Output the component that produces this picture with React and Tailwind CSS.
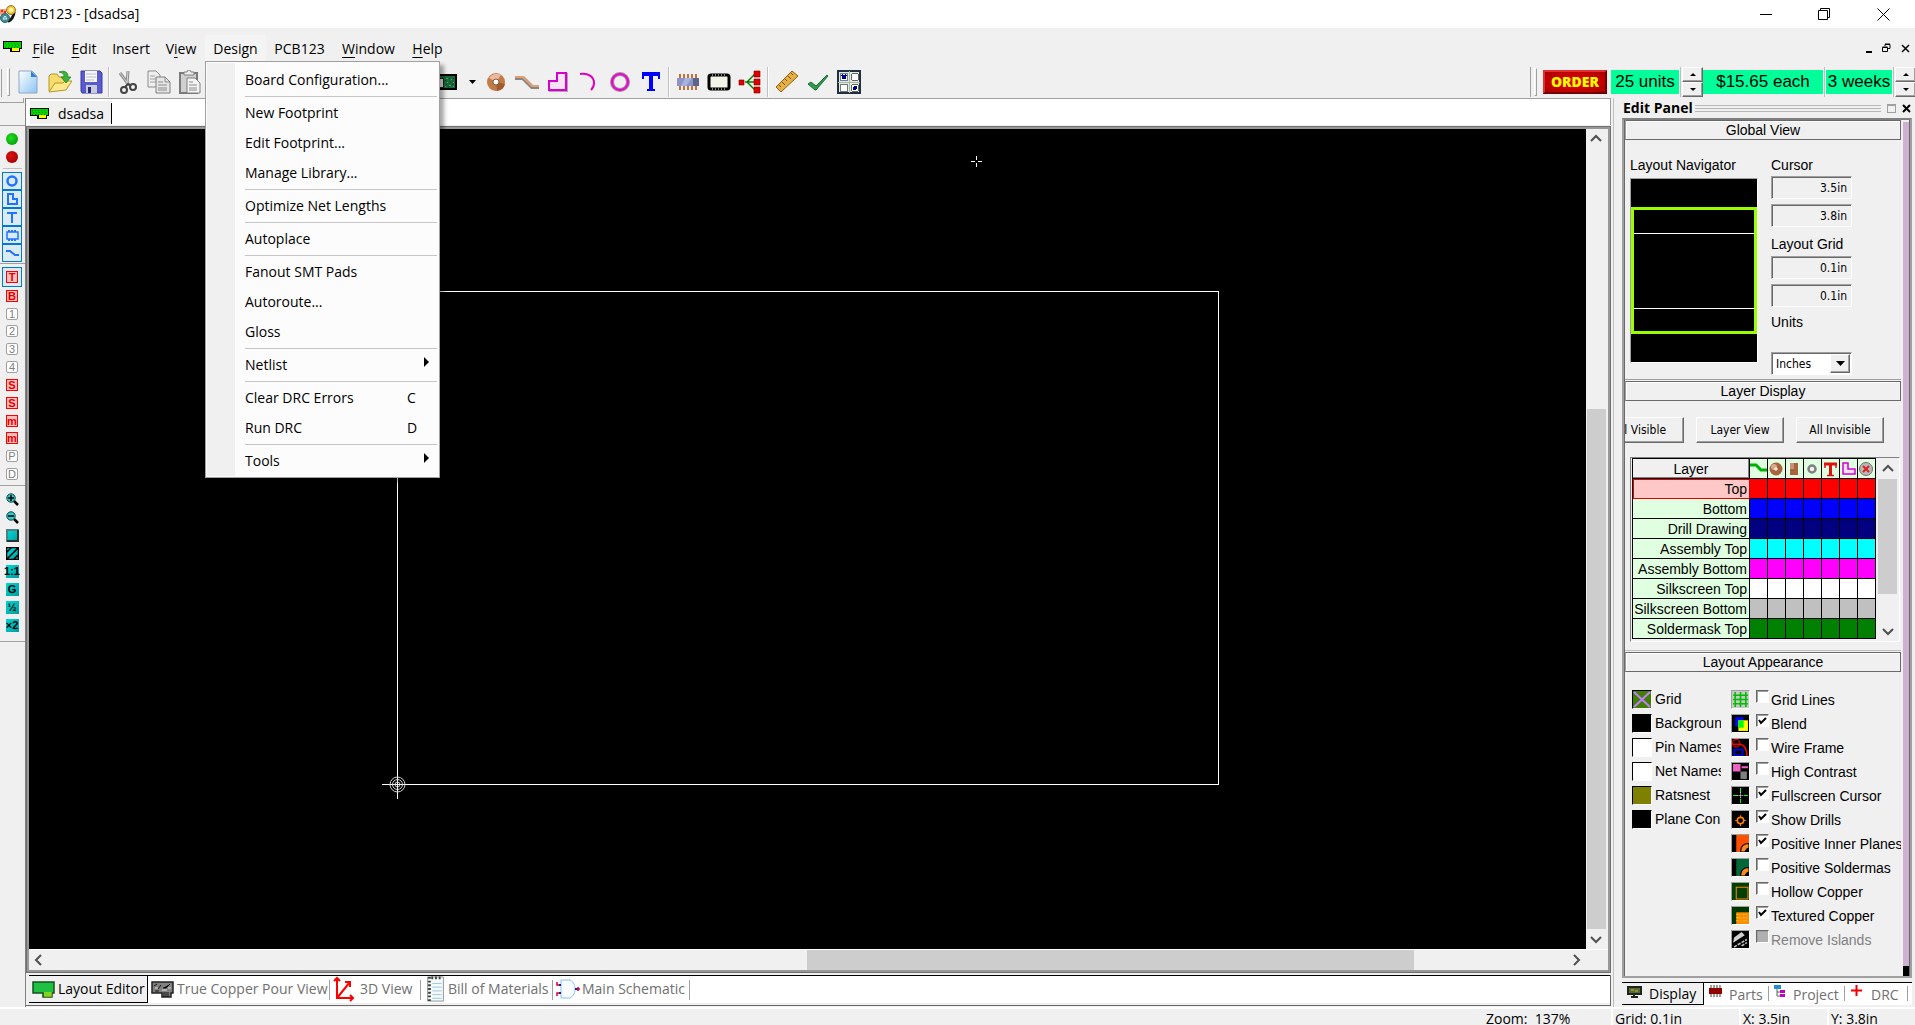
import React, { useState } from "react";
import clsx from "clsx";

const MENUS = [
  { label: "File", key: 0, width: "w-[39px]" },
  { label: "Edit", key: 0, width: "w-[42px]" },
  { label: "Insert", width: "w-[52px]" },
  { label: "View", key: 1, width: "w-[48px]" },
  { label: "Design", width: "w-[61px]" },
  { label: "PCB123", width: "w-[67px]" },
  { label: "Window", key: 0, width: "w-[71px]" },
  { label: "Help", key: 0, width: "w-[47px]" },
];

// null draws a separator
const DESIGN_MENU = [
  { label: "Board Configuration..." },
  null,
  { label: "New Footprint" },
  { label: "Edit Footprint..." },
  { label: "Manage Library..." },
  null,
  { label: "Optimize Net Lengths" },
  null,
  { label: "Autoplace" },
  null,
  { label: "Fanout SMT Pads" },
  { label: "Autoroute..." },
  { label: "Gloss" },
  null,
  { label: "Netlist", sub: true },
  null,
  { label: "Clear DRC Errors", hotkey: "C" },
  { label: "Run DRC", hotkey: "D" },
  null,
  { label: "Tools", sub: true },
];

const LAYERS = [
  { name: "Top", color: "bg-[#ff0000]" },
  { name: "Bottom", color: "bg-[#0000ff]" },
  { name: "Drill Drawing", color: "bg-[#000080]" },
  { name: "Assembly Top", color: "bg-[#00ffff]" },
  { name: "Assembly Bottom", color: "bg-[#ff00ff]" },
  { name: "Silkscreen Top", color: "bg-white" },
  { name: "Silkscreen Bottom", color: "bg-[#c0c0c0]" },
  { name: "Soldermask Top", color: "bg-[#008000]" },
];

const SWATCHES = [
  { name: "Grid", color: "bg-[#408000]", cross: true },
  { name: "Background", color: "bg-black" },
  { name: "Pin Names", color: "bg-white" },
  { name: "Net Names", color: "bg-white" },
  { name: "Ratsnest", color: "bg-[#808000]" },
  { name: "Plane Conn", color: "bg-black" },
];

const OPTIONS = [
  { name: "Grid Lines", icon: "grid" },
  { name: "Blend", icon: "blend", on: true },
  { name: "Wire Frame", icon: "wire" },
  { name: "High Contrast", icon: "contrast" },
  { name: "Fullscreen Cursor", icon: "cursor", on: true },
  { name: "Show Drills", icon: "drill", on: true },
  { name: "Positive Inner Planes", icon: "plane", on: true },
  { name: "Positive Soldermas", icon: "mask" },
  { name: "Hollow Copper", icon: "hollow" },
  { name: "Textured Copper", icon: "texture", on: true },
  { name: "Remove Islands", icon: "islands", disabled: true },
];

const SUNKEN = "border border-t-[#a0a0a0] border-l-[#a0a0a0] border-r-white border-b-white";
const RAISED = "bg-[#f0f0f0] border border-t-white border-l-white border-r-[#696969] border-b-[#696969] shadow-[inset_-1px_-1px_0_#a0a0a0]";

function BoardIcon() {
  return (
    <svg width="20" height="12" viewBox="0 0 20 12" shapeRendering="crispEdges">
      <path d="M0 0h19v8h-2v3H7V8H0z" />
      <path d="M1 1h17v6H1z" fill="#00d800" />
      <path d="M2 2h1M5 2h1M8 2h1M11 2h1M14 2h1M3 4h1M6 4h1M9 4h1M12 4h1M15 4h1M2 6h1M5 6h1M8 6h1M11 6h1M14 6h1" stroke="#007800" />
      <path d="M9 7h7v3H9z" fill="#ffff00" />
    </svg>
  );
}

function AppIcon() {
  return (
    <svg width="16" height="20" viewBox="0 0 16 20">
      <path d="M8 17c3 0 6-5 6-9" fill="none" stroke="#111" strokeWidth="3" />
      <circle cx="11" cy="6" r="4.5" fill="#f0c030" stroke="#9a7a20" />
      <circle cx="11" cy="6" r="2.5" fill="#fff0a0" />
      <rect x="0" y="5" width="6" height="6" rx="1" fill="#f39a7c" />
      <path d="M1 7h2M4 8h2" stroke="#e03010" strokeWidth="2" />
      <circle cx="5" cy="14" r="4.5" fill="#3f8d99" stroke="#2a6670" />
      <path d="M3 15l2-3 2 3z" fill="none" stroke="#e6f4f4" />
    </svg>
  );
}

const TOOL_ART = {
  new: (
    <>
      <defs>
        <linearGradient id="page" x1="0" y1="0" x2="1" y2="1">
          <stop offset="0" stopColor="#fff" />
          <stop offset="1" stopColor="#8cc4f4" />
        </linearGradient>
      </defs>
      <path d="M2 1h13l5 5v17H2z" fill="url(#page)" stroke="#8fa6c4" />
      <path d="M14 1l6 6h-6z" fill="#2f7fd6" />
    </>
  ),
  open: (
    <>
      <path d="M1 21V6l2-2h6l2 3h8v4" fill="#f6dc6a" stroke="#b8942a" />
      <path d="M1 22l6-9h8l2-2h7l-6 9z" fill="#ffe98a" stroke="#b8942a" />
      <path d="M11 2c6-2 9 0 9 5h3l-5 6-5-6h3c0-3-1-4-5-5z" fill="#3cb43c" stroke="#1d7a1d" strokeWidth=".7" />
    </>
  ),
  save: (
    <>
      <path d="M2 1h19l2 2v20H3l-1-2z" fill="#5a5ad0" stroke="#3a3aa8" />
      <path d="M6 1h12v11H6z" fill="#f6f6f6" />
      <path d="M7 4h10M7 7h10M7 10h8" stroke="#b8c0c8" />
      <path d="M7 15h11v8H7z" fill="#c8ccd8" />
      <path d="M9 17h3v6H9z" fill="#27277c" />
    </>
  ),
  cut: (
    <>
      <path d="M4 3l9 12M12 1l-1 13" stroke="#8a8a8a" strokeWidth="3" />
      <path d="M4 3l9 12M12 1l-1 13" stroke="#d8d8d8" strokeWidth="1" />
      <circle cx="8" cy="20" r="3" fill="none" stroke="#444" strokeWidth="2" />
      <circle cx="17" cy="17" r="3" fill="none" stroke="#444" strokeWidth="2" />
      <path d="M9 17l3-3 3 2" fill="none" stroke="#444" strokeWidth="2" />
    </>
  ),
  copy: (
    <>
      <path d="M1 1h8l4 4v12H1z" fill="#eee" stroke="#8a8a8a" />
      <path d="M3 6h5M3 9h6M3 12h6" stroke="#a0a0a0" />
      <path d="M9 7h9l5 5v11H9z" fill="#e6e6e6" stroke="#808080" />
      <path d="M18 7v5h5M11 12h5M11 15h9M11 18h9M11 20h9" fill="none" stroke="#8a8a8a" />
    </>
  ),
  paste: (
    <>
      <path d="M2 3h17v20H2z" fill="#d0d0d0" stroke="#7a7a7a" strokeWidth="2" />
      <path d="M6 5V2h3l1-2h2l1 2h3v3z" fill="#eee" stroke="#808080" />
      <path d="M9 8h8l5 5v10H9z" fill="#f4f4f4" stroke="#808080" />
      <path d="M11 12h4M11 15h8M11 18h8M11 20h8" stroke="#8a8a8a" />
    </>
  ),
  pad: (
    <>
      <circle cx="12" cy="12" r="9" fill="#c07c48" />
      <path d="M5 8a9 9 0 0 1 12-3l-5 7z" fill="#ecb8a0" />
      <path d="M12 12l9 2a9 9 0 0 1-8 7z" fill="#a05c2c" />
      <circle cx="12" cy="12" r="3" fill="#fff" stroke="#8a5a38" />
    </>
  ),
  trace: (
    <>
      <path d="M0 8h8l9 9h7" fill="none" stroke="#8a8484" strokeWidth="4" />
      <path d="M0 7h8l9 9h7" fill="none" stroke="#e0a070" strokeWidth="2" />
    </>
  ),
  poly: (
    <>
      <path d="M12 4h9v17H4v-9h8z" fill="none" stroke="#b0a0b0" strokeWidth="2" />
      <path d="M11 3h9v17H3v-9h8z" fill="#f6e4f6" stroke="#d800d0" strokeWidth="2" />
    </>
  ),
  arc: <path d="M3 4c9-1 14 3 14 9 0 3-1 5-3 7" fill="none" stroke="#e000c0" strokeWidth="2" />,
  circle: (
    <>
      <circle cx="12" cy="12" r="8" fill="none" stroke="#a08ca0" strokeWidth="4" />
      <circle cx="12" cy="12" r="8" fill="none" stroke="#f000d0" strokeWidth="2" />
    </>
  ),
  text: (
    <>
      <path d="M3 4h18M12 4v17" stroke="#0000ff" strokeWidth="4" />
      <path d="M4 4v5M20 4v5M8 20h8" stroke="#0000ff" strokeWidth="2" />
    </>
  ),
  ic: (
    <>
      <path d="M4 4v16M8 4v16M12 4v16M16 4v16M20 4v16" stroke="#c07040" strokeWidth="2" />
      <path d="M1 8h22v8H1z" fill="#8c94c8" />
      <path d="M9 8h7l-6 8H5z" fill="#a8b0dc" />
      <path d="M17 8h6v8h-6z" fill="#5c6488" />
    </>
  ),
  film: (
    <>
      <rect x="2" y="5" width="20" height="14" rx="2" fill="#f4f4e8" stroke="#000" strokeWidth="3" />
      <path d="M5 5h15M5 19h15" stroke="#fff" strokeDasharray="1 2" />
    </>
  ),
  net: (
    <>
      <path d="M7 12h9M9 12l8-8M9 12l8 8" stroke="#008000" strokeWidth="1.5" />
      <path d="M1 10h5v5H1zM16 1h6v6h-6zM16 9h6v6h-6zM16 17h6v6h-6z" fill="#e00000" stroke="#800000" strokeWidth=".6" />
    </>
  ),
  ruler: (
    <>
      <path d="M1 17L17 1l6 5L6 22z" fill="#e8b040" stroke="#8c6410" />
      <path d="M4 15l2 2M7 12l3 3M10 9l2 2M13 6l3 3M16 3l2 2" stroke="#6c4c08" />
    </>
  ),
  check: <path d="M2 14l3-2 5 4L21 5l1 1-12 14H9z" fill="#2c9c4c" stroke="#1c7038" strokeWidth="1" />,
  form: (
    <g shapeRendering="crispEdges">
      <path d="M1 1h22v22H1z" fill="#e4ece0" stroke="#203040" strokeWidth="2" />
      <path d="M12 1v22M1 12h22" stroke="#a8b8a8" />
      <path d="M3 3h7v7H3z" fill="#fff" stroke="#7080a0" />
      <path d="M5 5l4 4M9 5l-4 4" stroke="#000080" strokeWidth="1.5" />
      <path d="M3 14h7v7H3z" fill="#fff" stroke="#707870" />
      <circle cx="18" cy="7" r="4" fill="#fff" stroke="#606860" />
      <circle cx="18" cy="18" r="4" fill="#fff" stroke="#606860" />
      <circle cx="18" cy="18" r="2" fill="#000080" />
    </g>
  ),
};

function Tool({ name }) {
  return (
    <button aria-label={name} className="flex h-[30px] w-[31px] items-center justify-center">
      <svg width="24" height="24" viewBox="0 0 24 24">{TOOL_ART[name]}</svg>
    </button>
  );
}

function Divider() {
  return <div className="mx-[2px] h-[30px] w-[2px] border-l border-[#c0c0c0] bg-white" />;
}

function Spinner({ name }) {
  return (
    <div className="flex h-[30px] w-[21px] flex-col">
      <button aria-label={`${name} up`} className={clsx(RAISED, "flex flex-1 items-center justify-center")}>
        <svg width="6" height="3" viewBox="0 0 6 3"><path d="M0 3l3-3 3 3z" /></svg>
      </button>
      <button aria-label={`${name} down`} className={clsx(RAISED, "flex flex-1 items-center justify-center")}>
        <svg width="6" height="3" viewBox="0 0 6 3"><path d="M0 0h6L3 3z" /></svg>
      </button>
    </div>
  );
}

function TitleBar() {
  return (
    <header className="flex h-7 shrink-0 items-center bg-white">
      <AppIcon />
      <h1 className="ml-[6px] flex-1 text-[14px] leading-5">PCB123 - [dsadsa]</h1>
      <div className="flex items-center">
        <button aria-label="Minimize" className="flex h-7 w-[58px] items-center justify-center">
          <svg width="12" height="12"><path d="M0 6.500h12" stroke="#000" /></svg>
        </button>
        <button aria-label="Restore" className="flex h-7 w-[58px] items-center justify-center">
          <svg width="13" height="13" fill="none" stroke="#000"><path d="M.5 2.500h9v9h-9zM2.500 2V.500h9v9H10" /></svg>
        </button>
        <button aria-label="Close" className="flex h-7 w-[62px] items-center justify-center pr-[2px]">
          <svg width="13" height="13" stroke="#000"><path d="M.5.5l12 12M12.500.5l-12 12" /></svg>
        </button>
      </div>
    </header>
  );
}

function MenuLabel({ label, keyIndex }) {
  if (keyIndex === undefined) return label;
  return (
    <>
      {label.slice(0, keyIndex)}
      <span className="underline underline-offset-[3px]">{label[keyIndex]}</span>
      {label.slice(keyIndex + 1)}
    </>
  );
}

function DesignMenu() {
  return (
    <div role="menu" className="absolute left-0 top-[26px] z-10 flex w-[235px] border border-[#a0a0a0] bg-[#fcfcfc] py-px pl-px shadow-[4px_4px_4px_rgba(0,0,0,0.35)]">
      <div className="w-[28px] bg-[#f0f0f0]" />
      <div className="flex-1 pl-[10px] pr-[2px] pt-[2px]">
        {DESIGN_MENU.map((item, i) =>
          item === null ? (
            <div key={i} className="my-px h-px bg-[#c6c6c6]" />
          ) : (
            <button key={item.label} role="menuitem" className="flex h-[30px] w-full items-center text-left">
              <span className="flex-1">{item.label}</span>
              {item.hotkey && <span className="mr-[20px] w-[10px]">{item.hotkey}</span>}
              {item.sub && (
                <svg width="5" height="10" viewBox="0 0 5 10" className="mb-[6px] mr-[8px]"><path d="M0 0l5 5-5 5z" /></svg>
              )}
            </button>
          )
        )}
      </div>
    </div>
  );
}

function MenuBar({ open, setOpen }) {
  return (
    <nav className="flex h-[39px] shrink-0 items-start pl-[3px] pt-[7px]">
      <div className="flex h-[24px] w-[21px] items-center"><BoardIcon /></div>
      {MENUS.map((m) => (
        <div key={m.label} className={clsx("relative", m.width)}>
          <button
            onClick={() => setOpen(open === m.label ? "" : m.label)}
            className={clsx("flex h-[27px] w-full items-center justify-center", open === m.label && "bg-[#f4f4f4]")}
          >
            <span><MenuLabel label={m.label} keyIndex={m.key} /></span>
          </button>
          {m.label === "Design" && open === "Design" && <DesignMenu />}
        </div>
      ))}
      <div className="ml-auto flex h-[26px] items-center gap-[10px] pr-[5px]">
        <button aria-label="Minimize document"><svg width="6" height="9"><path d="M0 7h6v2H0z" /></svg></button>
        <button aria-label="Restore document">
          <svg width="9" height="10" fill="none" stroke="#000"><path d="M.5 4.500h5v4h-5zM.5 4h5M3 3V1.500h5v4H6M3 1h5" /></svg>
        </button>
        <button aria-label="Close document"><svg width="9" height="9" stroke="#000" strokeWidth="1.500"><path d="M1 1l7 7M8 1L1 8" /></svg></button>
      </div>
    </nav>
  );
}

function Grip() {
  return <div className="h-[28px] w-[3px] border border-b-[#a0a0a0] border-l-white border-r-[#a0a0a0] border-t-white" />;
}

function Toolbar() {
  return (
    <div className="flex h-[31px] shrink-0 items-start">
      <div className="mt-[2px] h-[28px] w-[2px] border-r border-[#a0a0a0]" />
      <div className="ml-[5px] mr-[3px] mt-px"><Grip /></div>
      <Tool name="new" />
      <Tool name="open" />
      <Tool name="save" />
      <Divider />
      <Tool name="cut" />
      <Tool name="copy" />
      <Tool name="paste" />
      <div className="w-[220px]" />
      <button aria-label="component" className="flex h-[30px] w-[55px] items-center">
        <svg width="32" height="16" viewBox="0 0 32 16" shapeRendering="crispEdges">
          <path d="M1 1h30v14H1z" fill="#186838" stroke="#000" strokeWidth="2" />
          <path d="M6 4h12v9H6z" fill="#e8e8e8" stroke="#222" />
          <path d="M21 4h2M26 5h1M22 8h1M28 8h1M24 11h2M20 12h1M28 12h1" stroke="#4aa868" />
          <path d="M20 6h1M24 4h1M28 4h1M25 8h1M21 10h1M27 10h1M23 13h1" stroke="#0c4020" />
        </svg>
        <svg width="7" height="4" viewBox="0 0 7 4" className="ml-[12px]"><path d="M0 0h7L3.500 4z" /></svg>
      </button>
      <Tool name="pad" />
      <Tool name="trace" />
      <Tool name="poly" />
      <Tool name="arc" />
      <Tool name="circle" />
      <Tool name="text" />
      <Divider />
      <Tool name="ic" />
      <Tool name="film" />
      <Tool name="net" />
      <Divider />
      <Tool name="ruler" />
      <Tool name="check" />
      <Tool name="form" />
      <div className="-mr-px ml-auto flex items-center">
        <div className="mr-[3px] h-[30px] w-px bg-[#a0a0a0]" />
        <Grip />
        <button className="ml-[6px] mr-[4px] h-[24px] w-[64px] border-2 border-b-[#700000] border-l-[#e03030] border-r-[#700000] border-t-[#e03030] bg-radial from-[#f00000] to-[#a80000] text-[14px] font-extrabold leading-5 text-[#ffff00]">
          ORDER
        </button>
        <span className="h-[24px] w-[68px] bg-[#00ff99] text-center font-['Liberation_Sans',sans-serif] text-[17px] leading-6">25 units</span>
        <div className="mx-px h-[30px] w-px bg-[#c0c0c0]" />
        <Spinner name="Units" />
        <span className="h-[24px] w-[120px] bg-[#00ff99] text-center font-['Liberation_Sans',sans-serif] text-[17px] leading-6">$15.65 each</span>
        <div className="mx-px h-[30px] w-px bg-[#c0c0c0]" />
        <span className="h-[24px] w-[66px] whitespace-nowrap bg-[#00ff99] text-center font-['Liberation_Sans',sans-serif] text-[17px] leading-6">3 weeks</span>
        <div className="mx-px h-[30px] w-px bg-[#c0c0c0]" />
        <Spinner name="Weeks" />
      </div>
    </div>
  );
}

const MODE_ART = [
  <circle key="o" cx="8" cy="8" r="4.500" fill="none" stroke="#1e74ff" strokeWidth="2.500" />,
  <path key="p" d="M4 3h5v5h4v5H4z" fill="none" stroke="#1e74ff" strokeWidth="2" />,
  <path key="t" d="M3 4h10M8 4v10" stroke="#1e74ff" strokeWidth="2" />,
  <g key="f" stroke="#1e74ff" fill="none"><rect x="3" y="5" width="11" height="7" strokeWidth="1.500" /><path d="M5 3v2M8 3v2M11 3v2M5 12v2M8 12v2M11 12v2" strokeWidth="2" /></g>,
  <path key="s" d="M2 6h4l5 4h4" fill="none" stroke="#1e74ff" strokeWidth="2" />,
];

const LAYER_KEYS = ["T", "B", "1", "2", "3", "4", "S", "S", "m", "m", "P", "D"];

function TealTile({ children }) {
  return (
    <svg width="13" height="13" viewBox="0 0 13 13">
      <defs>
        <linearGradient id="teal" x1="0" y1="0" x2="1" y2="1">
          <stop offset="0" stopColor="#00e0e0" />
          <stop offset="1" stopColor="#009898" />
        </linearGradient>
      </defs>
      <path d="M0 0h13v13H0z" fill="url(#teal)" />
      {children}
    </svg>
  );
}

function TealText({ children }) {
  return (
    <span className="flex h-[13px] w-[13px] items-center justify-center bg-linear-to-br from-[#00d8d8] to-[#009c9c] text-[11px] font-bold leading-3">
      {children}
    </span>
  );
}

function Magnifier({ plus }) {
  return (
    <svg width="13" height="13" viewBox="0 0 13 13">
      <path d="M8 8l4 4" stroke="#000" strokeWidth="2.500" />
      <circle cx="5" cy="5" r="4.200" fill="#30c8c8" stroke="#084848" />
      <path d={plus ? "M2 5h6M5 2v6" : "M2 5h6"} stroke="#000" strokeWidth="1.500" />
    </svg>
  );
}

const ZOOM_TOOLS = [
  { name: "Zoom in", art: <Magnifier plus /> },
  { name: "Zoom out", art: <Magnifier /> },
  { name: "Zoom window", art: <TealTile><path d="M1 12V1h11" fill="none" stroke="#508080" strokeWidth="2" /><path d="M12 1v11H1" fill="none" stroke="#303030" strokeWidth="2" /></TealTile> },
  { name: "Redraw", art: <TealTile><path d="M0 6l6-6M1 12L12 1M7 13l6-6M.5.5h12v12H.5z" fill="none" stroke="#000" strokeWidth="1.500" /></TealTile> },
  { name: "Actual size", art: <TealText>1:1</TealText> },
  { name: "Grid", art: <TealText>G</TealText> },
  { name: "Half", art: <TealText>½</TealText> },
  { name: "Double", art: <TealText>×2</TealText> },
];

function LeftRail() {
  return (
    <aside className="w-[25px] shrink-0 font-['Liberation_Sans',sans-serif]">
      <div className="mr-px h-[5px] border-b border-r border-[#a0a0a0]" />
      <div className="h-[23px] border-b border-[#a0a0a0]" />
      <div className="flex flex-col pl-[2px] pt-1">
        {["from-[#20e020] to-[#008c00]", "from-[#e01010] to-[#900000]"].map((c, i) => (
          <button key={c} aria-label={i ? "Stop" : "Go"} className="flex h-[18px] w-[19px] items-center justify-center">
            <span className={clsx("h-3 w-3 rounded-full bg-radial-[at_40%_40%]", c)} />
          </button>
        ))}
      </div>
      <div className="mx-[3px] mt-[2px] h-px bg-[#c0c0c0]" />
      <div className="ml-[2px] mt-[3px] flex h-[90px] w-[20px] flex-col">
        {MODE_ART.map((art, i) => (
          <button key={i} aria-label={`Mode ${i + 1}`} className="flex flex-1 items-center justify-center border border-[#0078d7] bg-[#dceaf4]">
            <svg width="16" height="16" viewBox="0 0 16 16">{art}</svg>
          </button>
        ))}
      </div>
      <div className="mt-px h-px bg-[#a0a0a0]" />
      <div className="ml-[2px] mt-[3px] flex h-[216px] w-[20px] flex-col">
        {LAYER_KEYS.map((k, i) => {
          const red = "TBSm".includes(k);
          return (
            <button key={i} aria-label={`Layer ${k}`} className={clsx("flex flex-1 items-center justify-center", i === 0 && "border border-[#0078d7] bg-[#dceaf4]")}>
              <span className={clsx("flex h-3 w-3 items-center justify-center border text-[11px] leading-3", red ? "border-[#ff0000] bg-[#ffc0c0] font-bold text-[#e00000]" : "rounded-[2px] border-[#a0a0a0] bg-white text-[#808080]")}>
                {k}
              </span>
            </button>
          );
        })}
      </div>
      <div className="mt-[2px] h-px bg-[#a0a0a0]" />
      <div className="ml-[2px] mt-1 flex h-[144px] w-[20px] flex-col">
        {ZOOM_TOOLS.map((z) => (
          <button key={z.name} aria-label={z.name} className="flex flex-1 items-center justify-center">{z.art}</button>
        ))}
      </div>
      <div className="mt-[7px] h-px bg-[#a0a0a0]" />
    </aside>
  );
}

function Chevron({ d }) {
  return (
    <svg width="12" height="12" viewBox="0 0 12 12" fill="none" stroke="#505050" strokeWidth="2"><path d={d} /></svg>
  );
}

function Board() {
  return (
    <svg className="block min-h-0 min-w-0 flex-1 bg-black" fill="none">
      <g stroke="#fff" shapeRendering="crispEdges">
        <rect x="368.500" y="162.500" width="821" height="493" />
        <path d="M353 655.500h15M368.500 656v14" />
        <path d="M942 32.500h4M949 32.500h4M947.500 27v4M947.500 34v4" />
      </g>
      <g stroke="#d0d0d0">
        <circle cx="368.500" cy="655.500" r="7.500" />
        <circle cx="368.500" cy="655.500" r="5" />
        <circle cx="368.500" cy="655.500" r="2.500" />
      </g>
    </svg>
  );
}

function Workspace() {
  const tab = "flex h-full items-center whitespace-nowrap text-[14px] leading-5";
  return (
    <main className="flex min-w-0 flex-1 flex-col border-l border-[#808080]">
      <div className="flex h-[27px] shrink-0 items-end border-r border-t border-[#a0a0a0] bg-white pb-px pl-1">
        <div className="flex h-[23px] items-end bg-[#f0f0f0]">
          <button className="flex items-center border-r border-black pr-[7px]">
            <BoardIcon />
            <span className="ml-[8px] leading-[21px]">dsadsa</span>
          </button>
        </div>
      </div>
      <div className="mt-px flex min-h-0 flex-1 flex-col border-[3px] border-[#989898] outline-1 -outline-offset-1 outline-[#707070]">
        <div className="flex min-h-0 flex-1">
          <Board />
          <div className="flex w-[22px] flex-col items-center pr-[2px]">
            <div className="flex h-5 items-center"><Chevron d="M1 8l5-5 5 5" /></div>
            <div className="flex w-full flex-1 flex-col pl-px">
              <div className="grow-[260]" />
              <div className="grow-[519] bg-[#cdcdcd]" />
            </div>
            <div className="flex h-5 items-center"><Chevron d="M1 4l5 5 5-5" /></div>
          </div>
        </div>
        <div className="flex h-[21px] shrink-0 items-center border-t border-white pr-[22px]">
          <div className="flex w-5 justify-center"><Chevron d="M8 1L3 6l5 5" /></div>
          <div className="flex h-5 flex-1">
            <div className="grow-[757]" />
            <div className="grow-[607] bg-[#cdcdcd]" />
            <div className="grow-[152]" />
          </div>
          <div className="flex w-5 justify-center"><Chevron d="M4 1l5 5-5 5" /></div>
        </div>
      </div>
      <div className="mt-[2px] flex h-[31px] shrink-0 items-start border-b border-r border-[#696969] pb-[2px] pl-[3px]">
        <div className="flex h-full flex-1 border-t border-black bg-white text-[#707070]">
          <button className={clsx(tab, "w-[119px] border-b border-r border-black bg-[#f0f0f0] pl-[3px] text-black")}>
            <svg width="23" height="18" viewBox="0 0 23 18" className="mr-[3px]">
              <path d="M1 2h21v11h-2v4h-9v-4H1z" fill="#20c040" stroke="#145020" strokeWidth="1.500" />
              <path d="M13 12v5M15 12v5M17 12v5M19 12v5" stroke="#e8e800" />
            </svg>
            Layout Editor
          </button>
          <button className={clsx(tab, "w-[181px] pb-px pl-[3px]")}>
            <svg width="23" height="18" viewBox="0 0 23 18" className="mr-[3px]">
              <path d="M1 2h21v11h-2v4h-9v-4H1z" fill="#808080" stroke="#202020" strokeWidth="1.500" />
              <path d="M3 6l3-2M7 9l3-4M12 8h3l4-4M4 11h4M13 12v5M15 12v5M17 12v5" stroke="#101010" />
              <path d="M4 8h3M11 10h5M17 8h3" stroke="#e0e0e0" />
            </svg>
            True Copper Pour View
          </button>
          <div className="mt-[4px] h-[20px] w-px bg-[#a0a0a0]" />
          <button className={clsx(tab, "w-[90px] pb-px pl-[3px]")}>
            <svg width="22" height="26" viewBox="0 0 22 26" fill="none" stroke="#ff0000" strokeWidth="2" className="mr-[5px]">
              <path d="M4 2v20h16M4 22L17 6M1 5l3-3 3 3M12 6h5v5M17 19l3 3-3 3" />
            </svg>
            3D View
          </button>
          <div className="mt-[4px] h-[20px] w-px bg-[#a0a0a0]" />
          <button className={clsx(tab, "w-[131px] pb-px pl-[5px]")}>
            <svg width="19" height="26" viewBox="0 0 19 28" className="mr-[3px]">
              <path d="M1 1h17v26H1z" fill="#f4fafa" stroke="#909090" />
              <path d="M3 1v26" stroke="#404040" strokeWidth="3" strokeDasharray="2 2" />
              <path d="M5 2h12" stroke="#404040" strokeWidth="3" strokeDasharray="2 2" />
              <path d="M6 8h10M6 12h10M6 16h10M6 20h10M6 24h10" stroke="#98c4e0" />
            </svg>
            Bill of Materials
          </button>
          <div className="mt-[4px] h-[20px] w-px bg-[#a0a0a0]" />
          <button className={clsx(tab, "w-[136px] pb-px pl-[3px]")}>
            <svg width="24" height="20" viewBox="0 0 24 20" fill="none" className="mr-[2px]">
              <path d="M5 1h9c4 2 5 6 5 9s-1 7-5 9H5z" fill="#fafdff" stroke="#80c0f0" />
              <path d="M1 3v3h4M1 17v-3h4" stroke="#e00020" strokeWidth="1.500" />
              <path d="M19 10h5M22 8v4" stroke="#c00040" strokeWidth="1.500" />
              <path d="M3 6h2M3 14h2M19 10h2" stroke="#0000c0" strokeWidth="1.500" />
            </svg>
            Main Schematic
          </button>
          <div className="mt-[4px] h-[20px] w-px bg-[#a0a0a0]" />
        </div>
      </div>
      <div className="h-px shrink-0" />
    </main>
  );
}

function SectionTitle({ children }) {
  return (
    <h2 className="flex h-[20px] shrink-0 items-center justify-center border border-[#696969] border-l-[#a0a0a0] leading-4 shadow-[inset_1px_1px_0_#fff]">
      {children}
    </h2>
  );
}

function Readout({ label, value }) {
  return (
    <input
      readOnly
      aria-label={label}
      value={value}
      className={clsx(SUNKEN, "h-[23px] w-[81px] px-1 text-right font-['DejaVu_Sans_Condensed','DejaVu_Sans',sans-serif] text-[12px] leading-4 shadow-[inset_1px_1px_0_#696969]")}
    />
  );
}

function GlobalView() {
  return (
    <section className="flex h-[239px] shrink-0 items-start pl-[5px] pt-4">
      <div className="w-[141px]">
        <p className="h-[22px] leading-[18px]">Layout Navigator</p>
        <div className={clsx(SUNKEN, "h-[185px] w-[128px] bg-black pt-[28px]")}>
          <div className="h-[127px] border-[3px] border-[#99ff00] pt-[23px]">
            <div className="h-[76px] border-y border-white" />
          </div>
        </div>
      </div>
      <div className="flex flex-col">
        <p className="h-[20px] leading-[18px]">Cursor</p>
        <div className="flex flex-col gap-[5px]">
          <Readout label="Cursor X" value="3.5in" />
          <Readout label="Cursor Y" value="3.8in" />
        </div>
        <p className="mt-[8px] h-[21px] leading-[18px]">Layout Grid</p>
        <div className="flex flex-col gap-[5px]">
          <Readout label="Grid X" value="0.1in" />
          <Readout label="Grid Y" value="0.1in" />
        </div>
        <label htmlFor="units" className="mt-[6px] h-[39px] leading-[18px]">Units</label>
        <div className={clsx(SUNKEN, "flex h-[23px] w-[81px] bg-white p-px shadow-[inset_1px_1px_0_#696969]")}>
          <select id="units" className="min-w-0 flex-1 appearance-none bg-transparent pl-[3px] font-['DejaVu_Sans_Condensed','DejaVu_Sans',sans-serif] text-[12px] leading-4">
            <option>Inches</option>
            <option>Mils</option>
            <option>Millimeters</option>
          </select>
          <div className={clsx(RAISED, "pointer-events-none flex w-[20px] items-center justify-center")}>
            <svg width="9" height="5" viewBox="0 0 9 5"><path d="M0 0h9L4.500 5z" /></svg>
          </div>
        </div>
      </div>
    </section>
  );
}

const COLUMN_ART = [
  <path key="a" d="M0 5h6l5 5h6" fill="none" stroke="#00b000" strokeWidth="3" />,
  <g key="b"><circle cx="8" cy="9" r="6.500" fill="#a8643c" /><circle cx="6" cy="7" r="3" fill="#d8a890" /><path d="M6 9h4M8 7v4" stroke="#fff" /></g>,
  <g key="c"><path d="M4 3h8v12H4z" fill="#a8643c" /><path d="M4 3h4v6H4z" fill="#c89078" /></g>,
  <circle key="d" cx="8" cy="9" r="3.500" fill="#f0f0f0" stroke="#808080" strokeWidth="2.500" />,
  <g key="e" stroke="#e01010"><path d="M2 4h13M8.500 4v12" strokeWidth="3" /><path d="M3 4v4M14 4v4M5 15.500h7" strokeWidth="1.500" /></g>,
  <path key="f" d="M3 3h5v6h7v5H3z" fill="#f8e0f8" stroke="#d000d0" strokeWidth="1.500" />,
  <g key="g"><circle cx="8" cy="9" r="6.500" fill="#b8b8b8" stroke="#707070" /><path d="M5 6l6 6M11 6l-6 6" stroke="#e02020" strokeWidth="2" /></g>,
];

function LayerTable() {
  return (
    <div className="ml-[5px] mr-px mt-[14px] flex h-[185px] border border-b-white border-l-[#808080] border-r-white border-t-[#808080]">
      <div className="flex-1 overflow-hidden pl-px">
        <table className="w-full table-fixed border-collapse">
          <thead>
            <tr className="h-[20px]">
              <th className="w-[117px] border border-black bg-[#f0f0f0] p-0 text-center font-normal leading-[18px] shadow-[inset_-1px_-1px_0_#808080]">Layer</th>
              {COLUMN_ART.map((art, i) => (
                <th key={i} className="border border-black bg-[#e0ffe0] p-0">
                  <svg width="17" height="18" viewBox="0 0 17 18">{art}</svg>
                </th>
              ))}
            </tr>
          </thead>
          <tbody>
            {LAYERS.map((l, i) => (
              <tr key={l.name} className="h-[20px]">
                <td className={clsx("whitespace-nowrap border border-black p-0 pr-[2px] text-right leading-[18px]", i === 0 ? "bg-[#ffc8c8] outline-1 -outline-offset-1 outline-[#e00000]" : "bg-[#e0ffe0]")}>{l.name}</td>
                {COLUMN_ART.map((_, c) => (
                  <td key={c} className={clsx("border border-black p-0", l.color)} />
                ))}
              </tr>
            ))}
          </tbody>
        </table>
      </div>
      <div className="flex w-[23px] flex-col items-center px-[2px]">
        <div className="flex h-[21px] items-center"><Chevron d="M1 8l5-5 5 5" /></div>
        <div className="h-[115px] w-full bg-[#cdcdcd]" />
        <div className="flex-1" />
        <div className="flex h-[21px] items-center"><Chevron d="M1 4l5 5 5-5" /></div>
      </div>
    </div>
  );
}

const OPTION_ART = {
  grid: <><path d="M0 0h16v16H0z" fill="#c8c8c8" /><path d="M3 1v14M8 1v14M13 1v14M1 4h14M1 8h14M1 12h14" stroke="#00c000" strokeWidth="1.500" /></>,
  blend: <><path d="M3 2h8v9H3z" fill="#0000ff" /><path d="M6 5h9v10H6z" fill="#ffff00" /><path d="M6 5h5v7H6z" fill="#00ff00" /></>,
  wire: <><circle cx="4" cy="4" r="3.500" fill="none" stroke="#ff0000" /><path d="M1 5h7c5 1 6 5 6 11" fill="none" stroke="#ff0000" strokeWidth="1.500" /><path d="M2 10h8v5H2z" fill="none" stroke="#0000ff" strokeWidth="1.500" /></>,
  contrast: <><path d="M1 1h7v7H1zM9 3h6v2H9z" fill="#f060c8" /><path d="M8 8h6v7H8z" fill="#808080" /></>,
  cursor: <><path d="M1 8h4M11 8h4M8 1v4M8 11v4" stroke="#00ff00" /><path d="M5 8h6M8 5v6" stroke="#fff" strokeDasharray="1 1" /></>,
  drill: <><circle cx="8" cy="9" r="3" fill="none" stroke="#ff8000" strokeWidth="1.500" /><path d="M3 9h2M11 9h2M8 4v2M8 12v2" stroke="#ff8000" /></>,
  plane: <><path d="M4 0h12v16H4z" fill="#ff5000" /><path d="M8 16c0-5 3-8 8-8v8z" fill="#ff8820" stroke="#000" /><path d="M12 16c0-2 2-4 4-4v4z" /></>,
  mask: <><path d="M4 0h12v16H4z" fill="#006838" /><path d="M8 16c0-5 3-8 8-8v8z" fill="#ff8820" stroke="#000" /><path d="M12 16c0-2 2-4 4-4v4z" /></>,
  hollow: <><path d="M0 0h16v16H0z" fill="#004000" /><path d="M4 4h11v11H4z" fill="none" stroke="#ff8000" /></>,
  texture: <><path d="M0 0h16v16H0z" fill="#003800" /><path d="M4 5h12v11H4z" fill="#ff8c00" /><path d="M4 7h12M4 10h12M4 13h12" stroke="#ffc820" strokeDasharray="2 1 1 2" /></>,
  islands: <><path d="M2 6l7-5 3 3-11 7z" fill="#d0d0d0" /><path d="M2 15l12-7M9 14l5-3" stroke="#c0c0c0" strokeWidth="1.500" strokeDasharray="3 1" /></>,
};

function Appearance() {
  const [checked, setChecked] = useState(OPTIONS.map((o) => !!o.on));
  const toggle = (i) => setChecked((prev) => prev.map((v, n) => (n === i ? !v : v)));

  return (
    <section className="flex items-start pl-[7px] pt-[18px]">
      <ul className="w-[99px] shrink-0">
        {SWATCHES.map((s) => (
          <li key={s.name} className="flex h-6 items-start">
            <button aria-label={`${s.name} color`} className={clsx("h-[19px] w-[20px] shrink-0 border border-b-white border-l-black border-r-white border-t-black", s.color)}>
              {s.cross && (
                <svg width="18" height="17" viewBox="0 0 18 17"><path d="M1 1l16 15M17 1L1 16" stroke="#c080ff" strokeWidth="2" /></svg>
              )}
            </button>
            <span className="ml-[3px] w-[66px] overflow-hidden whitespace-nowrap leading-[18px]">{s.name}</span>
          </li>
        ))}
      </ul>
      <ul className="min-w-0 flex-1">
        {OPTIONS.map((o, i) => (
          <li key={o.name} className="flex h-6 items-start">
            <span className={clsx(SUNKEN, "h-[19px] w-[19px] shrink-0 bg-black")}>
              <svg width="17" height="17" viewBox="0 0 16 16">{OPTION_ART[o.icon]}</svg>
            </span>
            <label className={clsx("ml-[6px] flex items-start", o.disabled && "text-[#808080]")}>
              <span className="grid shrink-0">
                <input
                  type="checkbox"
                  checked={checked[i]}
                  disabled={o.disabled}
                  onChange={() => toggle(i)}
                  className="col-start-1 row-start-1 h-[13px] w-[13px] appearance-none border border-b-white border-l-[#696969] border-r-white border-t-[#696969] bg-white shadow-[inset_1px_1px_0_#a0a0a0] disabled:bg-[#b0b0b0]"
                />
                {checked[i] && (
                  <svg width="13" height="13" viewBox="0 0 13 13" className="pointer-events-none col-start-1 row-start-1"><path d="M3 6l2 3 5-5" fill="none" stroke="#000" strokeWidth="2" /></svg>
                )}
              </span>
              <span className="ml-[2px] whitespace-nowrap leading-5">{o.name}</span>
            </label>
          </li>
        ))}
      </ul>
    </section>
  );
}

function EditPanel() {
  const button = "h-[26px] w-[88px] text-center font-['DejaVu_Sans_Condensed','DejaVu_Sans',sans-serif] text-[12px] leading-4";
  const tab = "flex h-full items-end text-[14px] leading-5 whitespace-nowrap";
  return (
    <aside className="flex w-[304px] shrink-0 flex-col border-l-2 border-[#f0f0f0] pl-[9px] pr-[3px] shadow-[inset_1px_0_0_#c0c0c0]">
      <div className="flex h-[20px] shrink-0 items-center px-px">
        <h2 className="text-[14px] font-bold leading-5">Edit Panel</h2>
        <div className="ml-[2px] mr-[6px] flex flex-1 flex-col gap-[2px]">
          <div className="h-px bg-[#b8b8b8]" />
          <div className="h-px bg-[#b8b8b8]" />
          <div className="h-px bg-[#b8b8b8]" />
        </div>
        <button aria-label="Float panel" className="h-[9px] w-[9px] border border-t-2 border-[#a0a0a0]" />
        <button aria-label="Close panel" className="ml-[6px]"><svg width="9" height="9" stroke="#000" strokeWidth="2"><path d="M1 1l7 7M8 1L1 8" /></svg></button>
      </div>
      <div className="flex min-h-0 flex-1 border-2 border-[#a0a0a0] border-t-[#808080] bg-[#f0f0f0] font-['Liberation_Sans',sans-serif] text-[14px]">
        <div className="flex min-w-0 flex-1 flex-col overflow-hidden border-l border-[#696969]">
          <SectionTitle>Global View</SectionTitle>
          <GlobalView />
          <div className="mb-px h-px shrink-0 bg-[#a0a0a0]" />
          <SectionTitle>Layer Display</SectionTitle>
          <div className="mt-[16px] flex h-[26px] shrink-0 justify-between pr-[17px]">
            <div className="flex w-[59px] justify-end overflow-hidden">
              <button className={clsx(RAISED, button, "shrink-0")}>All Visible</button>
            </div>
            <button className={clsx(RAISED, button)}>Layer View</button>
            <button className={clsx(RAISED, button)}>All Invisible</button>
          </div>
          <LayerTable />
          <div className="mb-px mt-[8px] h-px shrink-0 bg-[#c0c0c0]" />
          <SectionTitle>Layout Appearance</SectionTitle>
          <Appearance />
        </div>
        <div className="ml-[2px] flex w-[7px] flex-col border-r border-[#696969] pt-[2px]">
          <div className="flex-1 bg-[#d0b0d0]" />
          <div className="h-[10px] bg-black" />
        </div>
      </div>
      <div className="mt-[4px] flex h-[23px] shrink-0 border-t border-black bg-white text-[#707070]">
        <button className={clsx(tab, "w-[82px] border-b border-r border-black bg-[#f0f0f0] pl-[5px] text-black")}>
          <svg width="15" height="12" viewBox="0 0 15 12" className="mb-[6px] mr-[7px]"><path d="M1 1h13v7H1z" fill="#507030" stroke="#222" strokeWidth="2" /><path d="M4 4h3M8 5h3" stroke="#e8a020" /><path d="M7 8v3M4 11h7" stroke="#222" strokeWidth="2" /></svg>
          Display
        </button>
        <button className={clsx(tab, "w-[64px] pl-[5px]")}>
          <svg width="13" height="12" viewBox="0 0 13 12" className="mb-[8px] mr-[7px]"><path d="M2 0v12M5 0v12M8 0v12M11 0v12" stroke="#404040" /><path d="M0 3h13v6H0z" fill="#900000" /></svg>
          Parts
        </button>
        <div className="mt-[3px] h-[15px] w-px bg-[#a0a0a0]" />
        <button className={clsx(tab, "w-[75px] pl-[5px]")}>
          <svg width="11" height="12" viewBox="0 0 11 12" className="mb-[8px] mr-[8px]"><path d="M0 0h7v4H0z" fill="#2090d0" /><path d="M3 4v7h3M3 7h3" fill="none" stroke="#606060" /><path d="M6 5h5v3H6zM6 9h5v3H6z" fill="#c000c0" /></svg>
          Project
        </button>
        <div className="mt-[3px] h-[15px] w-px bg-[#a0a0a0]" />
        <button className={clsx(tab, "w-[62px] pl-[6px]")}>
          <svg width="11" height="11" viewBox="0 0 11 11" className="mb-[9px] mr-[9px]"><path d="M0 5.500h11M5.500 0v11" stroke="#f00000" strokeWidth="2" /></svg>
          DRC
        </button>
        <div className="mt-[3px] h-[15px] w-px bg-[#a0a0a0]" />
      </div>
      <div className="h-[2px] shrink-0" />
    </aside>
  );
}

function StatusBar() {
  return (
    <footer className="flex h-[18px] shrink-0 items-start overflow-hidden whitespace-pre border-t-2 border-white text-[14px] leading-5">
      <div className="flex-1 border-r-2 border-white" />
      <div className="w-[128px] border-r-2 border-white pl-px">Zoom:  137%</div>
      <div className="w-[128px] border-r-2 border-white pl-[2px]">Grid: 0.1in</div>
      <div className="w-[88px] border-r-2 border-white pl-[2px]">X: 3.5in</div>
      <div className="w-[86px] pl-[2px]">Y: 3.8in</div>
    </footer>
  );
}

export default function App() {
  const [open, setOpen] = useState("Design");

  return (
    <div className="flex h-screen flex-col overflow-hidden bg-[#f0f0f0] font-['Open_Sans',sans-serif] text-[14px] leading-5 text-black">
      <TitleBar />
      <MenuBar open={open} setOpen={setOpen} />
      <Toolbar />
      <div className="flex min-h-0 flex-1">
        <LeftRail />
        <Workspace />
        <EditPanel />
      </div>
      <StatusBar />
    </div>
  );
}
